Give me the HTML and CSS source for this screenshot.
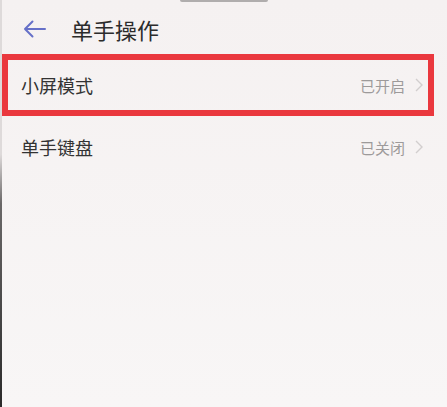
FILE: index.html
```html
<!DOCTYPE html>
<html lang="zh-CN">
<head>
    <meta charset="UTF-8">
    <meta name="viewport" content="width=device-width, initial-scale=1.0">
    <title>单手操作</title>
    <link rel="stylesheet" href="styles.css">
</head>
<body>
    <div class="screen">
        <div class="notch"></div>
        <div class="header">
            <svg class="back" width="23" height="18" viewBox="0 0 23 18">
                <path d="M22 9H2M9.5 1.5L2 9l7.5 7.5" fill="none" stroke="#6670c8" stroke-width="2" stroke-linecap="round" stroke-linejoin="round"/>
            </svg>
            <span class="title">单手操作</span>
        </div>
        <div class="list">
            <div class="row selected">
                <span class="label">小屏模式</span>
                <span class="value">已开启</span>
                <svg class="chevron" width="8" height="14" viewBox="0 0 8 14">
                    <path d="M1 1l6 6-6 6" fill="none" stroke="#d2cece" stroke-width="1.4"/>
                </svg>
            </div>
            <div class="row">
                <span class="label">单手键盘</span>
                <span class="value">已关闭</span>
                <svg class="chevron" width="8" height="14" viewBox="0 0 8 14">
                    <path d="M1 1l6 6-6 6" fill="none" stroke="#d2cece" stroke-width="1.4"/>
                </svg>
            </div>
        </div>
    </div>
</body>
</html>
```

FILE: styles.css
```css
body {
    margin: 0;
    padding: 0;
    background-color: #f6f2f2;
    font-family: "Noto Sans CJK SC", "Noto Sans", sans-serif;
}

.screen {
    position: relative;
    height: 407px;
    border-left: 2px solid #3c3c3c;
    border-image: linear-gradient(#dedada 38%, #6a6868 50%, #2a2a2a) 1;
    background: linear-gradient(#f5f1f1, #f8f6f6);
}

/* muesca de la camara arriba */
.notch {
    position: absolute;
    top: 0;
    left: 178px;
    width: 88px;
    height: 2px;
    background-color: #b0adad;
    border-radius: 0 0 3px 3px;
}

.header {
    display: flex;
    align-items: center;
    height: 54px;
    padding-left: 21px;
}

.header .back {
    margin-top: 4px;
}

.header .title {
    margin-left: 25px;
    font-size: 22px;
    color: #2b2b2b;
    margin-top: 3px;
}

.list {
    display: flex;
    flex-direction: column;
}

.row {
    display: flex;
    align-items: center;
    height: 50px;
    margin-right: 13px;
    padding: 0 5px 0 13px;
    border: 6px solid transparent;
}

.row.selected {
    border-color: #ea383e;
}

.row .label {
    flex: 1;
    font-size: 18px;
    color: #333;
}

.row .value {
    font-size: 15px;
    color: #9d9a9a;
    margin-right: 10px;
}
```
